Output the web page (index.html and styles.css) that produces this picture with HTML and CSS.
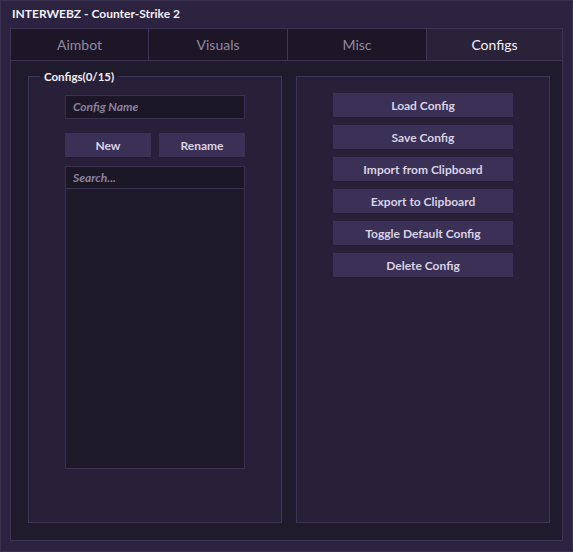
FILE: index.html
```html
<!DOCTYPE html>
<html>
<head>
<meta charset="utf-8">
<link rel="stylesheet" href="styles.css">
</head>
<body>
<div class="window">
  <div class="title">INTERWEBZ - Counter-Strike 2</div>
  <div class="frame">
    <div class="tabs">
      <div class="tab">Aimbot</div>
      <div class="tab">Visuals</div>
      <div class="tab">Misc</div>
      <div class="tab active">Configs</div>
    </div>
    <div class="content">
      <div class="panel left">
        <div class="legend">Configs(0/15)</div>
        <div class="input">Config Name</div>
        <div class="btn-row">
          <div class="btn">New</div>
          <div class="btn">Rename</div>
        </div>
        <div class="list">
          <div class="search">Search...</div>
        </div>
      </div>
      <div class="panel right">
        <div class="btn wide">Load Config</div>
        <div class="btn wide">Save Config</div>
        <div class="btn wide">Import from Clipboard</div>
        <div class="btn wide">Export to Clipboard</div>
        <div class="btn wide">Toggle Default Config</div>
        <div class="btn wide">Delete Config</div>
      </div>
    </div>
  </div>
</div>
</body>
</html>
```
FILE: styles.css
```css
* { box-sizing: border-box; }
html, body { margin: 0; padding: 0; background: #2a2339; }
body { font-family: Lato, "Open Sans", sans-serif; color: #ece8f3; }

.window {
  width: 573px;
  height: 552px;
  background: #2b2340;
  border: 1px solid #3a3150;
  padding: 0 9px 10px 9px;
  display: flex;
  flex-direction: column;
}
.title {
  height: 27px;
  padding-left: 2px;
  font-size: 12px;
  font-weight: 700;
  line-height: 25px;
  color: #f2eff7;
}
.frame {
  flex: 1;
  border: 1px solid #3e3554;
  background: #1f1a2c;
  display: flex;
  flex-direction: column;
}
.tabs {
  display: grid;
  grid-template-columns: 138px 139px 139px 1fr;
  height: 32px;
  border-bottom: 1px solid #3e3554;
}
.tab {
  background: #1c1627;
  border-right: 1px solid #3e3554;
  color: #8f8a9f;
  font-size: 14px;
  display: flex;
  align-items: center;
  justify-content: center;
}
.tab.active {
  background: #2a2239;
  color: #f2eff7;
  border-right: none;
}
.content {
  flex: 1;
  display: flex;
  gap: 14px;
  padding: 15px 12px 17px 17px;
}
.panel {
  flex: 1;
  background: #272038;
  border: 1px solid #3f3656;
  position: relative;
}
.panel.left {
  padding: 18px 36px 53px 36px;
  display: flex;
  flex-direction: column;
}
.legend {
  position: absolute;
  top: -8px;
  left: 11px;
  padding: 0 4px;
  font-size: 11.5px;
  font-weight: 700;
  line-height: 15px;
  color: #f2eff7;
  background: linear-gradient(#1f1a2c 50%, #272038 50%);
}
.input {
  height: 24px;
  background: #1c1727;
  border: 1px solid #3a3150;
  font-size: 12px;
  font-style: italic;
  font-weight: 700;
  color: #8a829d;
  padding-left: 7px;
  line-height: 22px;
}
.btn-row {
  display: flex;
  gap: 8px;
  margin-top: 14px;
}
.btn-row .btn { flex: 1; }
.btn {
  height: 24px;
  background: #3b3055;
  box-shadow: 0 1px 0 #231c33;
  font-size: 12px;
  font-weight: 700;
  color: #d9d3e5;
  display: flex;
  align-items: center;
  justify-content: center;
}
.list {
  margin-top: 9px;
  flex: 1;
  background: #1f1a2b;
  border: 1px solid #3a3150;
}
.search {
  height: 22px;
  background: #1c1727;
  border-bottom: 1px solid #3a3150;
  font-size: 12px;
  font-style: italic;
  font-weight: 700;
  color: #8a829d;
  padding-left: 7px;
  line-height: 21px;
}
.panel.right {
  padding: 16px 36px 0 36px;
  display: flex;
  flex-direction: column;
  gap: 8px;
}
```
